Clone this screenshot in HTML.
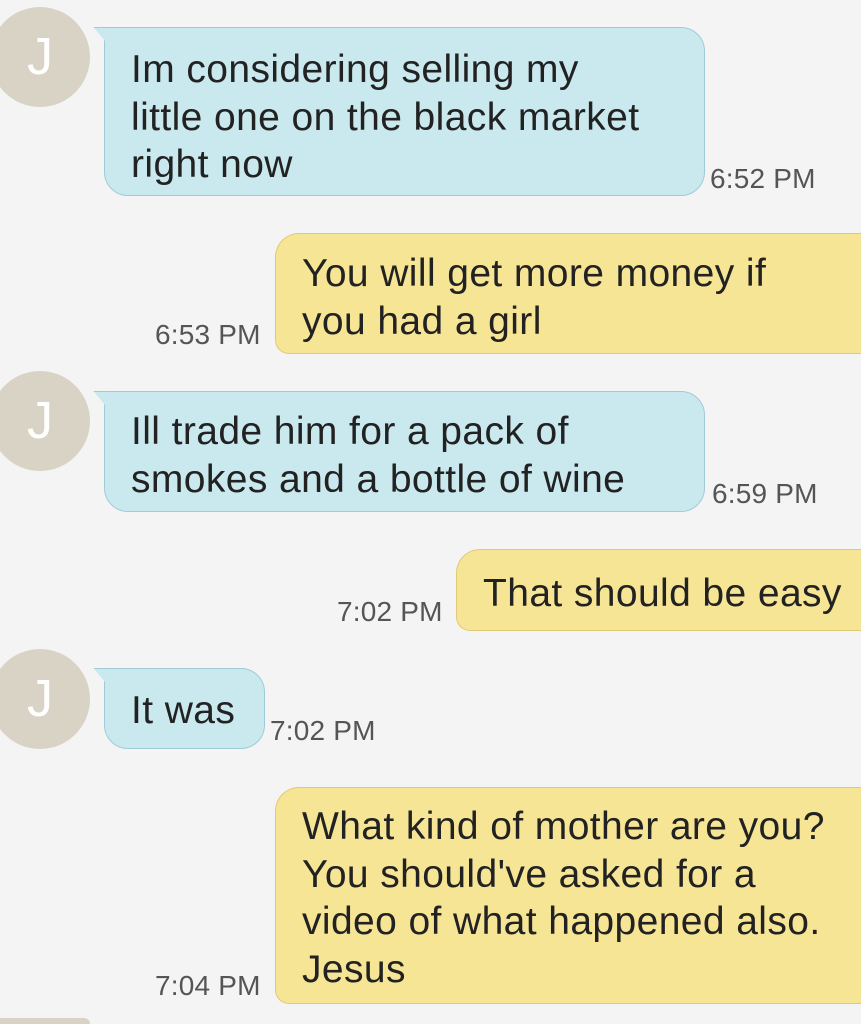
<!DOCTYPE html>
<html style="height:1024px;overflow:hidden"><head><meta charset="utf-8"><style>
body{margin:0;width:861px;height:1024px;background:#f4f4f4;overflow:hidden;position:relative;font-family:"Liberation Sans",sans-serif;}
.av{position:absolute;width:100px;height:100px;border-radius:50%;background:#d9d3c6;color:#fff;font-size:52px;text-align:center;line-height:100px;}
.b{position:absolute;box-sizing:border-box;font-size:39px;letter-spacing:0.4px;line-height:47.5px;color:#222;padding-left:26px;white-space:nowrap;}
.in{background:#c9e9ef;border:1.5px solid #9fcbd6;border-radius:4px 24px 24px 24px;}
.in::before{content:"";position:absolute;left:-12px;top:-1.5px;width:14px;height:16px;background:#c9e9ef;border-top:1.5px solid #9fcbd6;clip-path:polygon(0 0,100% 0,100% 100%);}
.out{background:#f7e596;border:1.5px solid #e0c978;border-right:none;border-radius:24px 0 0 24px;border-bottom-left-radius:14px;}
.t{position:absolute;font-size:28px;color:#555;letter-spacing:0.2px;}
</style></head><body>
<div class="av" style="left:-10px;top:7px">J</div>
<div class="b in" style="left:104px;top:27px;width:601px;height:169px;padding-top:18px">Im considering selling my<br>little one on the black market<br>right now</div>
<div class="t" style="left:710px;top:163px">6:52 PM</div>

<div class="b out" style="left:275px;top:233px;width:586px;height:121px;padding-top:16px">You will get more money if<br>you had a girl</div>
<div class="t" style="left:155px;top:319px">6:53 PM</div>

<div class="av" style="left:-10px;top:371px">J</div>
<div class="b in" style="left:104px;top:391px;width:601px;height:121px;padding-top:16px">Ill trade him for a pack of<br>smokes and a bottle of wine</div>
<div class="t" style="left:712px;top:478px">6:59 PM</div>

<div class="b out" style="left:456px;top:549px;width:405px;height:82px;padding-top:20px;overflow:hidden">That should be easy</div>
<div class="t" style="left:337px;top:596px">7:02 PM</div>

<div class="av" style="left:-10px;top:649px">J</div>
<div class="b in" style="left:104px;top:668px;width:161px;height:81px;padding-top:18px">It was</div>
<div class="t" style="left:270px;top:715px">7:02 PM</div>

<div class="b out" style="left:275px;top:787px;width:586px;height:217px;padding-top:15px;overflow:hidden">What kind of mother are you?<br>You should've asked for a<br>video of what happened also.<br>Jesus</div>
<div class="t" style="left:155px;top:970px">7:04 PM</div>
<div class="av" style="left:-10px;top:1018px;height:6px;border-radius:50px 50px 0 0"></div>
</body></html>
